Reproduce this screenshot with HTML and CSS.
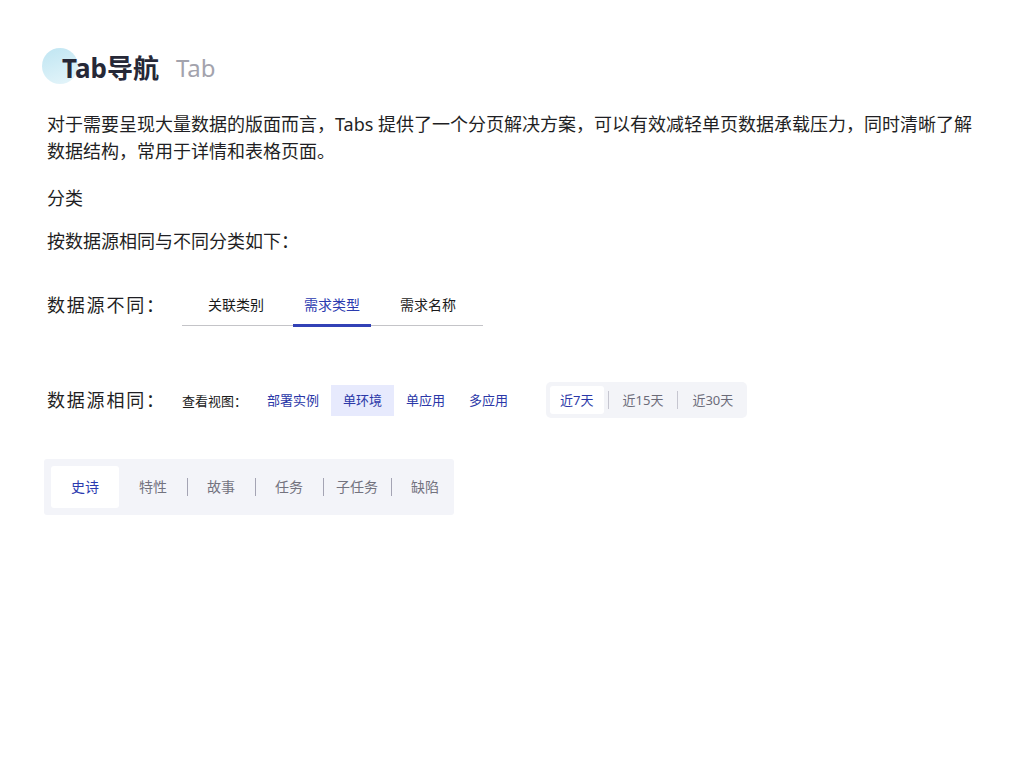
FILE: index.html
```html
<!DOCTYPE html>
<html lang="zh-CN">
<head>
<meta charset="utf-8">
<title>Tab导航</title>
<link rel="stylesheet" href="styles.css">
</head>
<body>
<div class="page">
  <header class="title">
    <span class="title-dot"></span>
    <h1 class="title-main">Tab导航</h1>
    <span class="title-sub">Tab</span>
  </header>

  <p class="desc">对于需要呈现大量数据的版面而言，Tabs 提供了一个分页解决方案，可以有效减轻单页数据承载压力，同时清晰了解数据结构，常用于详情和表格页面。</p>

  <h2 class="section">分类</h2>
  <p class="desc desc-sub">按数据源相同与不同分类如下：</p>

  <div class="row row-diff">
    <span class="row-label">数据源不同：</span>
    <div class="line-tabs">
      <div class="line-tab">关联类别</div>
      <div class="line-tab active">需求类型</div>
      <div class="line-tab">需求名称</div>
    </div>
  </div>

  <div class="row row-same">
    <span class="row-label">数据源相同：</span>
    <span class="view-label">查看视图：</span>
    <div class="seg">
      <div class="seg-item">部署实例</div>
      <div class="seg-item active">单环境</div>
      <div class="seg-item">单应用</div>
      <div class="seg-item">多应用</div>
    </div>
    <div class="range">
      <div class="range-item active">近7天</div>
      <div class="range-item">近15天</div>
      <div class="range-item">近30天</div>
    </div>
  </div>

  <div class="card-tabs">
    <div class="card-tab active">史诗</div>
    <div class="card-tab">特性</div>
    <div class="card-tab">故事</div>
    <div class="card-tab">任务</div>
    <div class="card-tab">子任务</div>
    <div class="card-tab">缺陷</div>
  </div>
</div>
</body>
</html>
```

FILE: styles.css
```css
* { box-sizing: border-box; }

html, body {
  margin: 0;
  padding: 0;
  background: #ffffff;
}

body {
  font-family: "Noto Sans", "Noto Sans CJK SC", sans-serif;
  color: #1f1f24;
}

.page {
  padding: 50px 47px 0 47px;
  width: 1024px;
}

/* Title */
.title {
  position: relative;
  display: flex;
  align-items: center;
  height: 36px;
  margin-left: 15px;
}

.title-dot {
  position: absolute;
  left: -20px;
  top: -2px;
  width: 36px;
  height: 36px;
  border-radius: 50%;
  background: linear-gradient(160deg, #bfe5f2 0%, #d6eff7 60%, #e6f5fa 100%);
}

.title-main {
  position: relative;
  margin: 0;
  font-size: 26px;
  font-weight: 700;
  line-height: 36px;
  color: #262837;
}

.title-sub {
  position: relative;
  margin-left: 17px;
  font-size: 24px;
  font-weight: 400;
  line-height: 36px;
  color: #a3a3ad;
}

/* Text */
.desc {
  margin: 25px 0 0 0;
  font-size: 18px;
  line-height: 27px;
  color: #1f1f24;
}

.section {
  margin: 20px 0 0 0;
  font-size: 18px;
  font-weight: 400;
  line-height: 27px;
  color: #1f1f24;
}

.desc-sub {
  margin-top: 16px;
}

/* Rows */
.row {
  display: flex;
  align-items: center;
}

.row-label {
  width: 135px;
  font-size: 18px;
  line-height: 27px;
  color: #1f1f24;
  letter-spacing: 1.8px;
}

.row-diff {
  margin-top: 30px;
}

/* Line tabs */
.line-tabs {
  display: flex;
  gap: 18px;
  padding: 0 16px 0 15px;
  border-bottom: 1px solid #c4c4c8;
}

.line-tab {
  position: relative;
  height: 40px;
  padding: 0 11px;
  font-size: 14px;
  line-height: 40px;
  color: #1a1a1a;
}

.line-tab.active {
  color: #2b3aaf;
}

.line-tab.active::after {
  content: "";
  position: absolute;
  left: 0;
  right: 0;
  bottom: -2px;
  height: 3px;
  background: #3241b6;
}

/* Same-source row */
.row-same {
  margin-top: 56px;
  height: 36px;
}

.view-label {
  font-size: 13px;
  color: #1a1a1a;
  margin-right: 8px;
}

.seg {
  display: flex;
}

.seg-item {
  height: 31px;
  padding: 0 12px;
  font-size: 13px;
  line-height: 31px;
  color: #2b38a8;
}

.seg-item.active {
  background: #e7eafd;
}

.range {
  display: flex;
  align-items: center;
  margin-left: 26px;
  height: 36px;
  padding: 4px;
  background: #f3f4f8;
  border-radius: 5px;
}

.range-item {
  position: relative;
  height: 28px;
  padding: 0 10px;
  font-size: 13px;
  line-height: 28px;
  color: #6b6b78;
}

.range-item + .range-item {
  margin-left: 9px;
}

.range-item + .range-item::before {
  content: "";
  position: absolute;
  left: -5px;
  top: 5px;
  width: 1px;
  height: 18px;
  background: #c6c6d0;
}

.range-item.active {
  background: #ffffff;
  border-radius: 3px;
  color: #2b38a8;
}

/* Card tabs */
.card-tabs {
  display: flex;
  width: 410px;
  height: 56px;
  margin: 41px 0 0 -3px;
  padding: 7px;
  background: #f3f4f9;
  border-radius: 3px;
  overflow: hidden;
}

.card-tab {
  position: relative;
  flex: 0 0 68px;
  height: 42px;
  font-size: 14px;
  line-height: 42px;
  text-align: center;
  color: #73737f;
}

.card-tab.active {
  background: #ffffff;
  border-radius: 3px;
  color: #2b3aaf;
}

.card-tab:nth-child(n+3)::before {
  content: "";
  position: absolute;
  left: 0;
  top: 12px;
  width: 1px;
  height: 18px;
  background: #a4a4b4;
}
```
